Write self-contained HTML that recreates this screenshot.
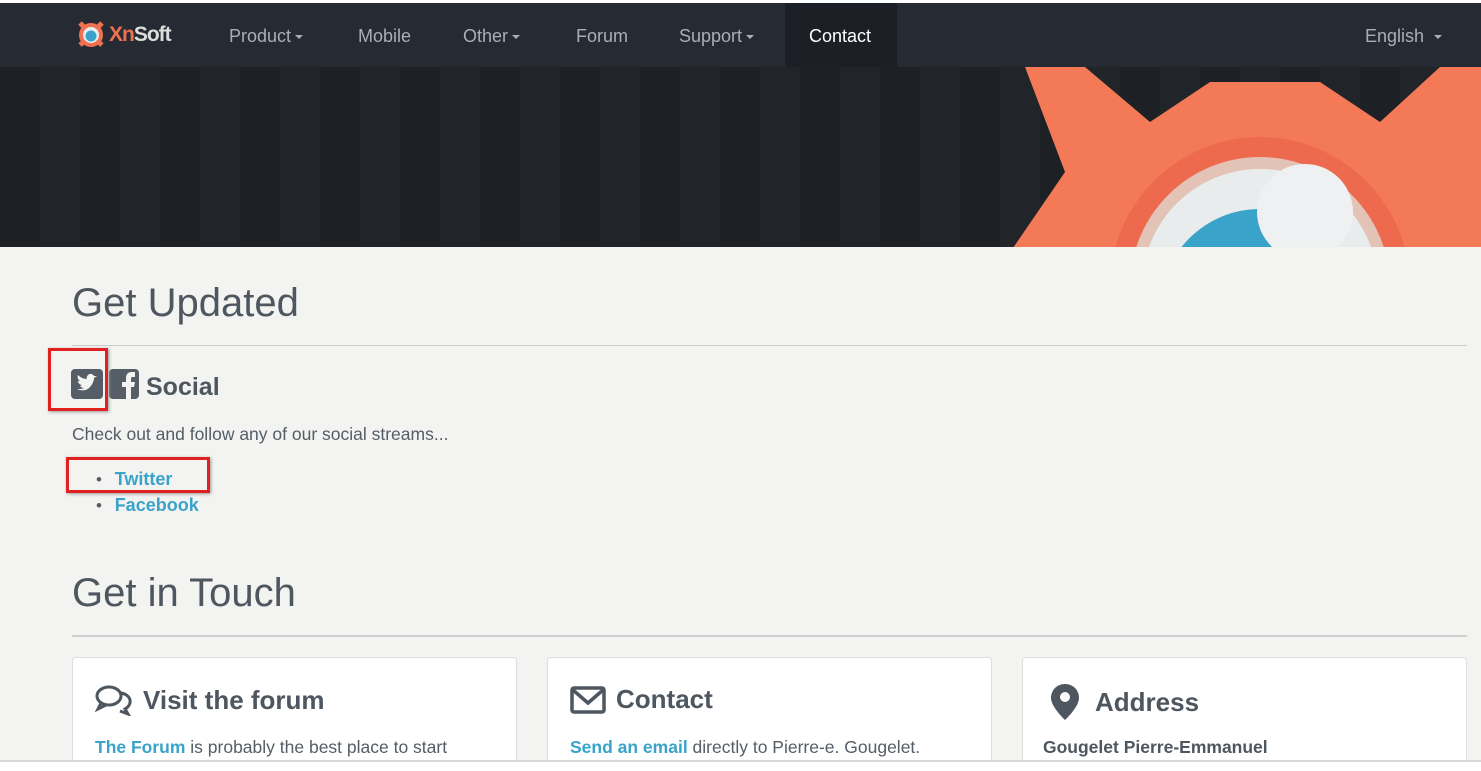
<!DOCTYPE html>
<html><head><style>
*{margin:0;padding:0;box-sizing:border-box}
body{width:1481px;height:771px;overflow:hidden;background:#fff;font-family:"Liberation Sans",sans-serif;position:relative}
.nav{position:absolute;top:3px;left:0;width:1481px;height:64px;background:#262b33}
.nav a{position:absolute;top:23px;color:#a9afb6;font-size:18px;text-decoration:none}
.caret{display:inline-block;width:0;height:0;border-left:4px solid transparent;border-right:4px solid transparent;border-top:4px solid #a9afb6;vertical-align:middle;margin-left:4px}
.active{position:absolute;left:785px;top:0;width:112px;height:64px;background:#1c2026}
.banner{position:absolute;top:67px;left:0;width:1481px;height:180px;background:repeating-linear-gradient(90deg,#1d2024 0 40px,#212428 40px 80px);overflow:hidden}
.main{position:absolute;top:247px;left:0;width:1481px;height:514px;background:#f3f3f1}
h1{position:absolute;left:72px;font-weight:normal;font-size:40px;color:#4e565f}
.hr{position:absolute;left:72px;width:1395px;height:1px;background:#cfcfcf}
.txt{position:absolute;color:#555d66;font-size:17px}
.lnk{color:#3aa3c9;font-weight:bold}
.card{position:absolute;top:657px;width:445px;height:110px;background:#fff;border:1px solid #ddd;border-radius:4px}
.card h3{position:absolute;left:22px;top:26px;font-size:26px;color:#4e565f;font-weight:bold;display:flex;align-items:center;gap:10px}
.card p{position:absolute;left:22px;top:79px;font-size:17.5px;color:#555d66;white-space:nowrap}
</style></head><body>
<div class="nav">
<div class="active"></div>
<svg style="position:absolute;left:76px;top:17px" width="30" height="28" viewBox="0 0 30 28"><path d="M4 3l6 6M26 3l-6 6M4 25l6-5M26 25l-6-5" stroke="#f0714f" stroke-width="5"/><circle cx="15" cy="15" r="12" fill="#f0714f"/><circle cx="15" cy="15" r="8" fill="#e8eef0"/><circle cx="15" cy="16" r="5.5" fill="#3aa3c9"/></svg>
<span style="position:absolute;left:109px;top:20px;font-size:21px;font-weight:bold;color:#f0714f;letter-spacing:-1px">Xn<span style="color:#ddd">Soft</span></span>
<a style="left:229px">Product<span class="caret"></span></a>
<a style="left:358px">Mobile</a>
<a style="left:463px">Other<span class="caret"></span></a>
<a style="left:576px">Forum</a>
<a style="left:679px">Support<span class="caret"></span></a>
<a style="left:809px;color:#fff">Contact</a>
<a style="left:1365px">English<span class="caret" style="margin-left:10px"></span></a>
</div>
<div class="banner">
<svg style="position:absolute;left:1000px;top:-20px" width="481" height="220" viewBox="0 0 481 220">
<path d="M25 20 L85 20 L150 75 L210 35 L320 35 L380 75 L440 20 L481 20 L481 220 L0 220 L65 125 Z" fill="#f47a57"/>
<circle cx="260" cy="240" r="150" fill="#ee6a4f"/>
<circle cx="260" cy="240" r="130" fill="#e3c3b6"/>
<circle cx="260" cy="240" r="118" fill="#e9eced"/>
<circle cx="260" cy="262" r="100" fill="#3aa3c9"/>
<circle cx="305" cy="165" r="48" fill="#eef0f1"/>
</svg>
</div>
<div class="main"></div>
<h1 style="top:281px">Get Updated</h1>
<div class="hr" style="top:345px"></div>
<svg style="position:absolute;left:71px;top:369px" width="32" height="30" viewBox="0 0 32 30"><rect width="32" height="30" rx="4" fill="#555d66"/><path d="M6 20c4 2 10 2 13-2 3-3 4-7 4-9l3-2-3 0c-1-2-4-3-6-1-1 1-2 3-1 4-4 0-7-2-9-4-1 2 0 5 2 6l-2 0c0 2 2 4 4 4l-2 1c1 1 2 2 4 2-2 1-4 1-7 1z" fill="#f3f3f1"/></svg>
<svg style="position:absolute;left:109px;top:369px" width="30" height="30" viewBox="0 0 30 30"><rect width="30" height="30" rx="4" fill="#555d66"/><path d="M17 30V18h-4v-5h4V9c0-4 2-6 6-6h3v5h-2c-2 0-2 1-2 2v3h4l-1 5h-3v12z" fill="#f3f3f1"/></svg>
<div class="txt" style="left:146px;top:373px;font-size:25px;font-weight:bold;color:#4e565f">Social</div>
<div class="txt" style="left:72px;top:424px;font-size:17.5px">Check out and follow any of our social streams...</div>
<div class="txt" style="left:96px;top:469px">• <span class="lnk" style="margin-left:8px;font-size:18px">Twitter</span></div>
<div class="txt" style="left:96px;top:495px">• <span class="lnk" style="margin-left:8px;font-size:18px">Facebook</span></div>
<div style="position:absolute;left:48px;top:348px;width:60px;height:63px;border:3px solid #e1211f;box-shadow:1px 1px 3px #999"></div>
<div style="position:absolute;left:66px;top:457px;width:144px;height:36px;border:3px solid #e1211f;box-shadow:1px 1px 3px #999"></div>
<h1 style="top:571px">Get in Touch</h1>
<div class="hr" style="top:635px;height:2px"></div>
<div class="card" style="left:72px"><h3><svg width="38" height="32" viewBox="0 0 38 32" fill="none" stroke="#4e565f" stroke-width="3"><ellipse cx="14" cy="12" rx="12" ry="9"/><path d="M6 19l-3 6 8-4"/><path d="M26 9c6 1 10 5 9 10-1 3-3 5-5 6l3 5-8-3"/></svg>Visit the forum</h3><p><span class="lnk">The Forum</span> is probably the best place to start</p></div>
<div class="card" style="left:547px"><h3><svg width="36" height="28" viewBox="0 0 36 28" fill="none" stroke="#4e565f" stroke-width="3.5"><rect x="2" y="2" width="32" height="24" rx="2"/><path d="M3 4l15 13L33 4"/></svg>Contact</h3><p><span class="lnk">Send an email</span> directly to Pierre-e. Gougelet.</p></div>
<div class="card" style="left:1022px"><h3 style="left:28px;gap:16px"><svg width="28" height="36" viewBox="0 0 28 36"><path d="M14 0C6 0 0 6 0 14c0 9 14 22 14 22s14-13 14-22C28 6 22 0 14 0z" fill="#4e565f"/><circle cx="14" cy="13" r="5" fill="#fff"/></svg>Address</h3><p style="left:20px;font-weight:bold;color:#4e565f">Gougelet Pierre-Emmanuel</p></div>
<div style="position:absolute;left:0;top:760px;width:1481px;height:11px;background:#fff;border-top:2px solid #d8d8d8"></div>
</body></html>
